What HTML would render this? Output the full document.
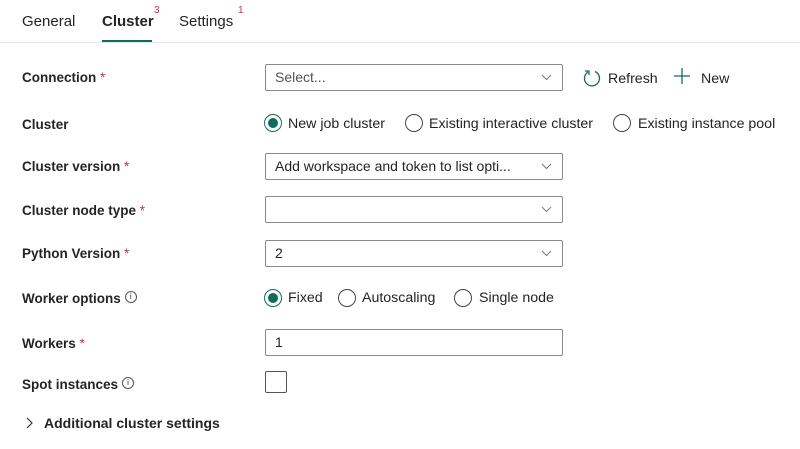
<!DOCTYPE html><html><head><style>
body{margin:0;width:800px;height:449px;background:#fff;font-family:"Liberation Sans",sans-serif;color:#242424;position:relative;overflow:hidden}
.a{position:absolute;white-space:nowrap}
.tab{font-size:15px;top:13px}
.sup{font-size:10px;color:#c4314b;position:absolute;top:5px}
.lbl{font-size:13.5px;font-weight:bold;left:22px;color:#242424}
.req{color:#c4314b;font-weight:normal}
.box{position:absolute;left:265px;height:25px;border:1px solid #8a8a8a;border-radius:2px;font-size:14px;line-height:25px;padding-left:9px;box-sizing:content-box;width:287px}
.chev{position:absolute;right:10px;top:9px}
.rad{position:absolute;width:16px;height:16px;border:1.5px solid #444;border-radius:50%}
.rad.on{border-color:#0f6b5c}
.rad.on::after{content:"";position:absolute;left:3px;top:3px;width:10px;height:10px;border-radius:50%;background:#0f6b5c}
.rt{font-size:14.2px}
.info{display:inline-block;width:10px;height:10px;border:1px solid #555;border-radius:50%;font-size:8px;line-height:10px;text-align:center;vertical-align:top;margin-left:4px;font-weight:normal}
</style></head><body>
<div class="a tab" style="left:22px">General</div>
<div class="a tab" style="left:102px;font-weight:bold">Cluster</div><div class="sup" style="left:154px">3</div>
<div style="position:absolute;left:102px;top:40px;width:50px;height:2px;background:#0f6b5c"></div>
<div class="a tab" style="left:179px">Settings</div><div class="sup" style="left:238px">1</div>
<div style="position:absolute;left:0;top:42px;width:800px;height:1px;background:#e8e8e8"></div>

<div class="a lbl" style="top:70px">Connection <span class="req">*</span></div>
<div class="box" style="top:64px;color:#555">Select...<svg class="chev" width="11" height="7"><path d="M1 1l4.5 4.5L10 1" stroke="#777" fill="none"/></svg></div>
<svg class="a" style="left:582px;top:68px" width="20" height="20"><path d="M6 4A7.5 7.5 0 1 0 13 3.5" stroke="#0f6b5c" stroke-width="1.3" fill="none"/><path d="M3 3h4v4" stroke="#0f6b5c" stroke-width="1.3" fill="none"/></svg>
<div class="a rt" style="left:608px;top:71px">Refresh</div>
<svg class="a" style="left:674px;top:68px" width="16" height="16"><path d="M8 0v16M0 8h16" stroke="#0f6b5c" stroke-width="1.3"/></svg>
<div class="a rt" style="left:701px;top:71px">New</div>

<div class="a lbl" style="top:117px">Cluster</div>
<div class="rad on" style="left:264px;top:114px"></div><div class="a rt" style="left:288px;top:116px">New job cluster</div>
<div class="rad" style="left:405px;top:114px"></div><div class="a rt" style="left:429px;top:116px">Existing interactive cluster</div>
<div class="rad" style="left:613px;top:114px"></div><div class="a rt" style="left:638px;top:116px">Existing instance pool</div>

<div class="a lbl" style="top:159px">Cluster version <span class="req">*</span></div>
<div class="box" style="top:153px">Add workspace and token to list opti...<svg class="chev" width="11" height="7"><path d="M1 1l4.5 4.5L10 1" stroke="#777" fill="none"/></svg></div>
<div class="a lbl" style="top:203px">Cluster node type <span class="req">*</span></div>
<div class="box" style="top:196px"><svg class="chev" width="11" height="7"><path d="M1 1l4.5 4.5L10 1" stroke="#777" fill="none"/></svg></div>
<div class="a lbl" style="top:246px">Python Version <span class="req">*</span></div>
<div class="box" style="top:240px">2<svg class="chev" width="11" height="7"><path d="M1 1l4.5 4.5L10 1" stroke="#777" fill="none"/></svg></div>

<div class="a lbl" style="top:291px">Worker options<span class="info">i</span></div>
<div class="rad on" style="left:264px;top:289px"></div><div class="a rt" style="left:288px;top:290px">Fixed</div>
<div class="rad" style="left:338px;top:289px"></div><div class="a rt" style="left:362px;top:290px">Autoscaling</div>
<div class="rad" style="left:454px;top:289px"></div><div class="a rt" style="left:479px;top:290px">Single node</div>

<div class="a lbl" style="top:336px">Workers <span class="req">*</span></div>
<div class="box" style="top:329px">1</div>
<div class="a lbl" style="top:377px">Spot instances<span class="info">i</span></div>
<div style="position:absolute;left:265px;top:371px;width:20px;height:20px;border:1px solid #555;border-radius:2px"></div>
<svg class="a" style="left:26px;top:417px" width="8" height="12"><path d="M1 1l5 5-5 5" stroke="#333" fill="none" stroke-width="1.2"/></svg>
<div class="a" style="left:44px;top:415px;font-size:14px;font-weight:bold">Additional cluster settings</div>
</body></html>
